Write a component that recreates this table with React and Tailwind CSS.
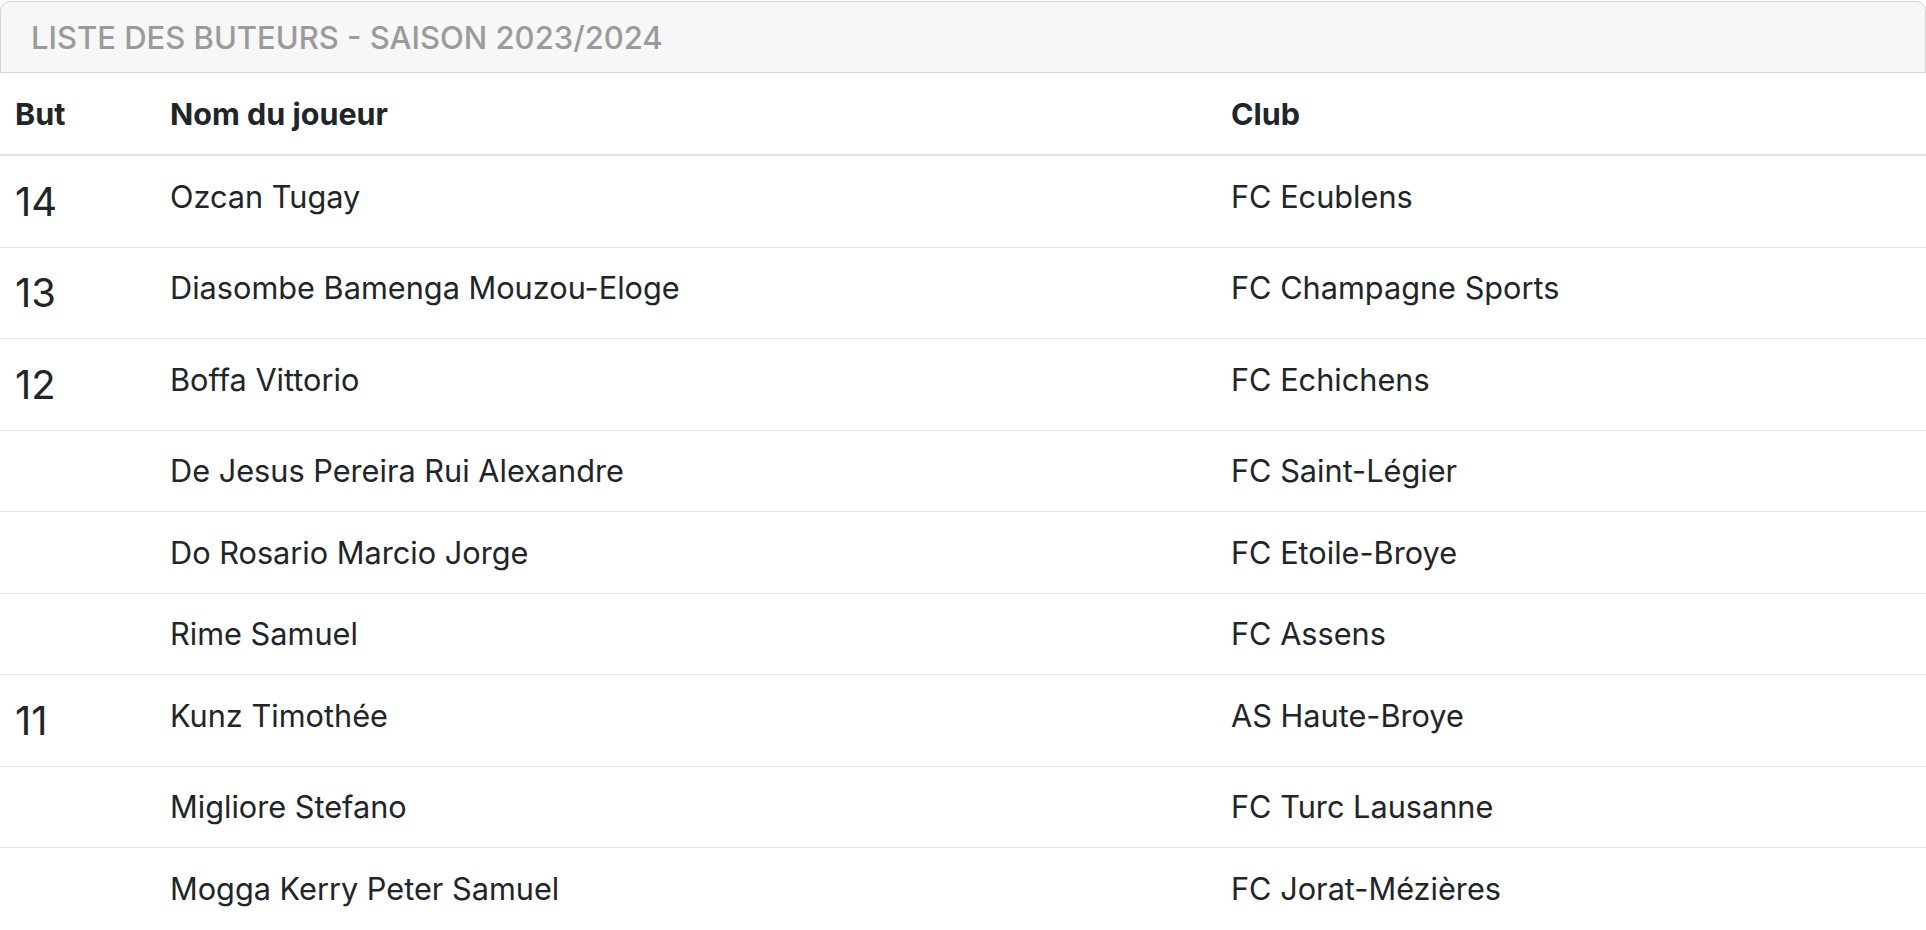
const scorers = [
  { goals: '14', name: 'Ozcan Tugay', club: 'FC Ecublens' },
  { goals: '13', name: 'Diasombe Bamenga Mouzou-Eloge', club: 'FC Champagne Sports' },
  { goals: '12', name: 'Boffa Vittorio', club: 'FC Echichens' },
  { goals: '', name: 'De Jesus Pereira Rui Alexandre', club: 'FC Saint-Légier' },
  { goals: '', name: 'Do Rosario Marcio Jorge', club: 'FC Etoile-Broye' },
  { goals: '', name: 'Rime Samuel', club: 'FC Assens' },
  { goals: '11', name: 'Kunz Timothée', club: 'AS Haute-Broye' },
  { goals: '', name: 'Migliore Stefano', club: 'FC Turc Lausanne' },
  { goals: '', name: 'Mogga Kerry Peter Samuel', club: 'FC Jorat-Mézières' },
];

export default function App() {
  return (
    <div className="min-h-screen bg-white pt-px font-['Inter','Liberation_Sans',sans-serif] text-[#212529]">
      <div className="flex h-[72px] items-center rounded-t-[10px] border border-[#d2d2d2] bg-[#f7f7f7] px-[30px] pt-[2px]">
        <h2 className="text-[31px] font-medium text-[#9b9b9b]">
          LISTE DES BUTEURS - SAISON 2023/2024
        </h2>
      </div>

      <table className="w-full border-collapse text-left">
        <thead>
          <tr className="border-b-2 border-[#dee2e6]">
            <th className="w-[155px] px-[15px] py-[18px] text-[30.5px] font-bold leading-[45px]">But</th>
            <th className="w-[1061px] px-[15px] py-[18px] text-[30.5px] font-bold leading-[45px]">Nom du joueur</th>
            <th className="px-[15px] py-[18px] text-[30.5px] font-bold leading-[45px]">Club</th>
          </tr>
        </thead>
        <tbody>
          {scorers.map((s) => (
            <tr key={s.name} className="border-t border-[#dee2e6] align-top">
              <td className="px-[15px] py-[17.75px] text-[40px] leading-[55px]">
                {s.goals}
              </td>
              <td className="px-[15px] py-[17.75px] text-[30.7px] leading-[45px]">{s.name}</td>
              <td className="px-[15px] py-[17.75px] text-[30.7px] leading-[45px]">{s.club}</td>
            </tr>
          ))}
        </tbody>
      </table>
    </div>
  );
}
